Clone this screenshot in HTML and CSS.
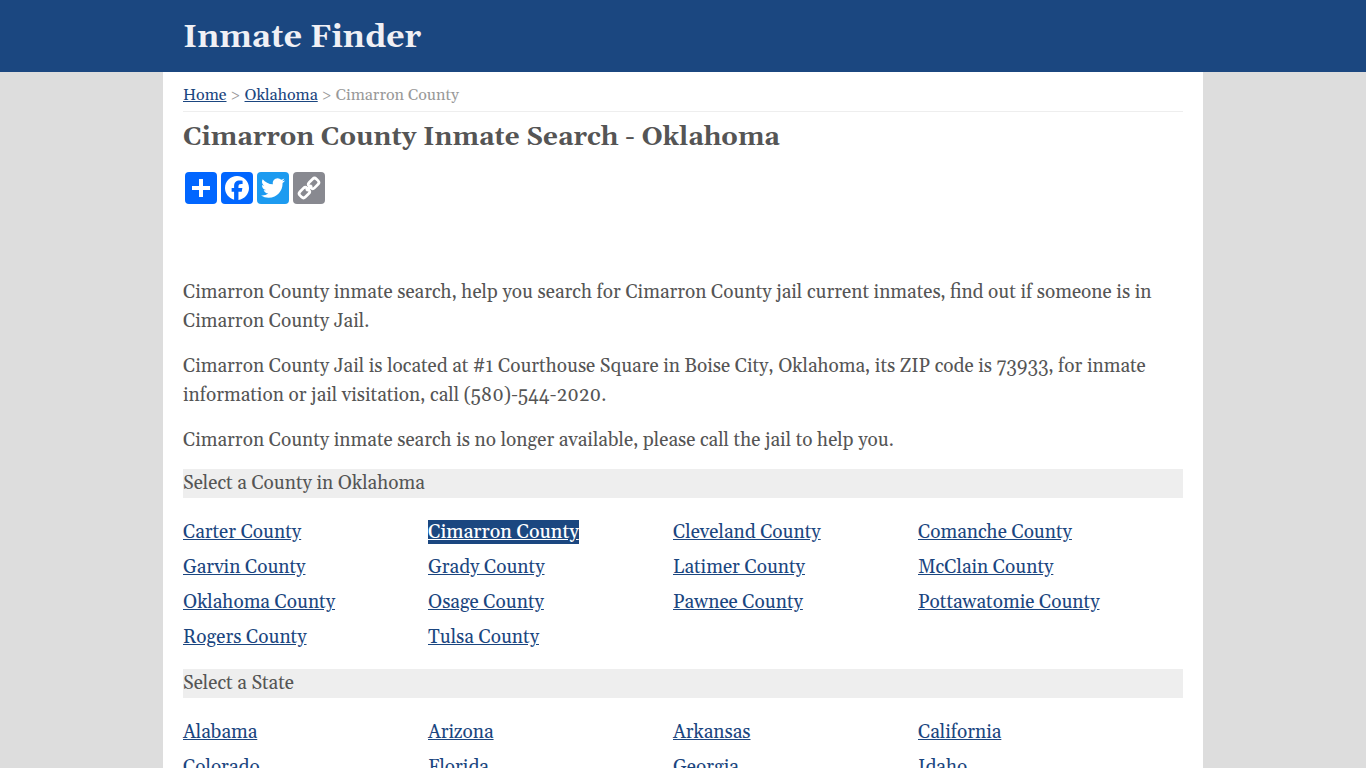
FILE: index.html
```html
<!DOCTYPE html>
<html lang="en">
<head>
<meta charset="utf-8">
<meta name="viewport" content="width=device-width, initial-scale=1">
<title>Cimarron County Inmate Search - Oklahoma</title>
<link rel="stylesheet" href="styles.css">
</head>
<body>
<header class="site-header">
  <div class="brand">Inmate Finder</div>
</header>
<main class="page">
  <nav class="breadcrumb" aria-label="Breadcrumb"><a href="#">Home</a> &gt; <a href="#">Oklahoma</a> &gt; Cimarron County</nav>
  <h1 class="title">Cimarron County Inmate Search - Oklahoma</h1>
  <div class="share">
    <a class="share-link" href="#" aria-label="Share"><svg viewBox="0 0 32 32"><path fill="#fff" d="M14 7h4v18h-4zM7 14h18v4H7z"/></svg></a>
    <a class="share-link" href="#" aria-label="Facebook"><svg viewBox="0 0 32 32"><path fill="#fff" d="M28 16c0-6.627-5.373-12-12-12S4 9.373 4 16c0 5.628 3.875 10.35 9.101 11.647v-7.98h-2.474V16H13.1v-1.58c0-4.085 1.849-5.978 5.859-5.978.76 0 2.072.15 2.608.298v3.325c-.283-.03-.775-.045-1.386-.045-1.967 0-2.728.745-2.728 2.683V16h3.92l-.673 3.667h-3.247v8.245C23.395 27.195 28 22.135 28 16"/></svg></a>
    <a class="share-link twitter" href="#" aria-label="Twitter"><svg viewBox="0 0 32 32"><path fill="#fff" d="M28 8.557a10 10 0 0 1-2.828.775 4.93 4.93 0 0 0 2.166-2.725 9.7 9.7 0 0 1-3.13 1.194 4.92 4.92 0 0 0-3.593-1.55 4.924 4.924 0 0 0-4.794 6.049c-4.09-.21-7.72-2.17-10.15-5.15a4.94 4.94 0 0 0-.665 2.477c0 1.71.87 3.214 2.19 4.1a5 5 0 0 1-2.23-.616v.06c0 2.39 1.7 4.38 3.952 4.83-.414.115-.85.174-1.297.174q-.476-.001-.928-.086a4.935 4.935 0 0 0 4.6 3.42 9.9 9.9 0 0 1-6.114 2.107q-.597 0-1.175-.068a13.95 13.95 0 0 0 7.55 2.213c9.056 0 14.01-7.507 14.01-14.013q0-.32-.015-.637c.96-.695 1.795-1.56 2.455-2.55z"/></svg></a>
    <a class="share-link copy" href="#" aria-label="Copy link"><svg viewBox="0 0 32 32"><g fill="none" stroke="#fff" stroke-width="2.7" transform="rotate(-45 16 16)"><rect x="4.4" y="12.2" width="10.2" height="7.6" rx="2.6"/><rect x="17.4" y="12.2" width="10.2" height="7.6" rx="2.6"/><path d="M12 16h8"/></g></svg></a>
  </div>
  <p class="text">Cimarron County inmate search, help you search for Cimarron County jail current inmates, find out if someone is in Cimarron County Jail.</p>
  <p class="text">Cimarron County Jail is located at #1 Courthouse Square in Boise City, Oklahoma, its ZIP code is 73933, for inmate information or jail visitation, call (580)-544-2020.</p>
  <p class="text">Cimarron County inmate search is no longer available, please call the jail to help you.</p>
  <h2 class="section">Select a County in Oklahoma</h2>
  <ul class="links">
    <li><a href="#">Carter County</a></li>
    <li><a class="current" href="#" aria-current="page">Cimarron County</a></li>
    <li><a href="#">Cleveland County</a></li>
    <li><a href="#">Comanche County</a></li>
    <li><a href="#">Garvin County</a></li>
    <li><a href="#">Grady County</a></li>
    <li><a href="#">Latimer County</a></li>
    <li><a href="#">McClain County</a></li>
    <li><a href="#">Oklahoma County</a></li>
    <li><a href="#">Osage County</a></li>
    <li><a href="#">Pawnee County</a></li>
    <li><a href="#">Pottawatomie County</a></li>
    <li><a href="#">Rogers County</a></li>
    <li><a href="#">Tulsa County</a></li>
  </ul>
  <h2 class="section">Select a State</h2>
  <ul class="links">
    <li><a href="#">Alabama</a></li>
    <li><a href="#">Arizona</a></li>
    <li><a href="#">Arkansas</a></li>
    <li><a href="#">California</a></li>
    <li><a href="#">Colorado</a></li>
    <li><a href="#">Florida</a></li>
    <li><a href="#">Georgia</a></li>
    <li><a href="#">Idaho</a></li>
  </ul>
</main>
</body>
</html>
```
FILE: styles.css
```css
* { box-sizing: border-box; }
html { scrollbar-width: none; }
body {
  margin: 0;
  background: #ddd;
  color: #555;
  font-family: Georgia, Gelasio, "Liberation Serif", serif;
  font-size: 19px;
  line-height: 29px;
}
a { color: #1b4680; }
.site-header { background: #1b4780; }
.brand {
  max-width: 1040px;
  margin: 0 auto;
  padding: 4px 20px 0;
  color: #f0f0f5;
  font-size: 32px;
  font-weight: bold;
  line-height: 68px;
}
.page {
  max-width: 1040px;
  margin: 0 auto;
  padding: 10px 20px 20px;
  background: #fff;
}
.breadcrumb {
  padding: 0 0 3px;
  border-bottom: 1px solid #eee;
  color: #999;
  font-size: 16px;
  line-height: 26px;
}
.title {
  margin: 6px 0 14px;
  font-size: 26px;
  line-height: 40px;
}
.share {
  display: flex;
  gap: 4px;
  padding: 0 2px;
  margin-bottom: 74px;
}
.share-link {
  width: 32px;
  height: 32px;
  border-radius: 4px;
  background: #0166ff;
}
.share-link svg { display: block; }
.twitter { background: #1d9bf0; }
.copy { background: #888990; }
.text { margin: 0 0 16px; }
.text:last-of-type { margin-bottom: 14px; }
.section {
  margin: 0;
  background: #eee;
  font-size: 19px;
  font-weight: normal;
}
.links {
  display: grid;
  grid-template-columns: repeat(4, 1fr);
  row-gap: 6px;
  margin: 0;
  padding: 20px 20px 17px 0;
  list-style: none;
}
@media (max-width: 700px) {
  .links { grid-template-columns: repeat(2, 1fr); }
}
.links .current {
  background: #1b4780;
  color: #fff;
  font-weight: 500;
}
```
